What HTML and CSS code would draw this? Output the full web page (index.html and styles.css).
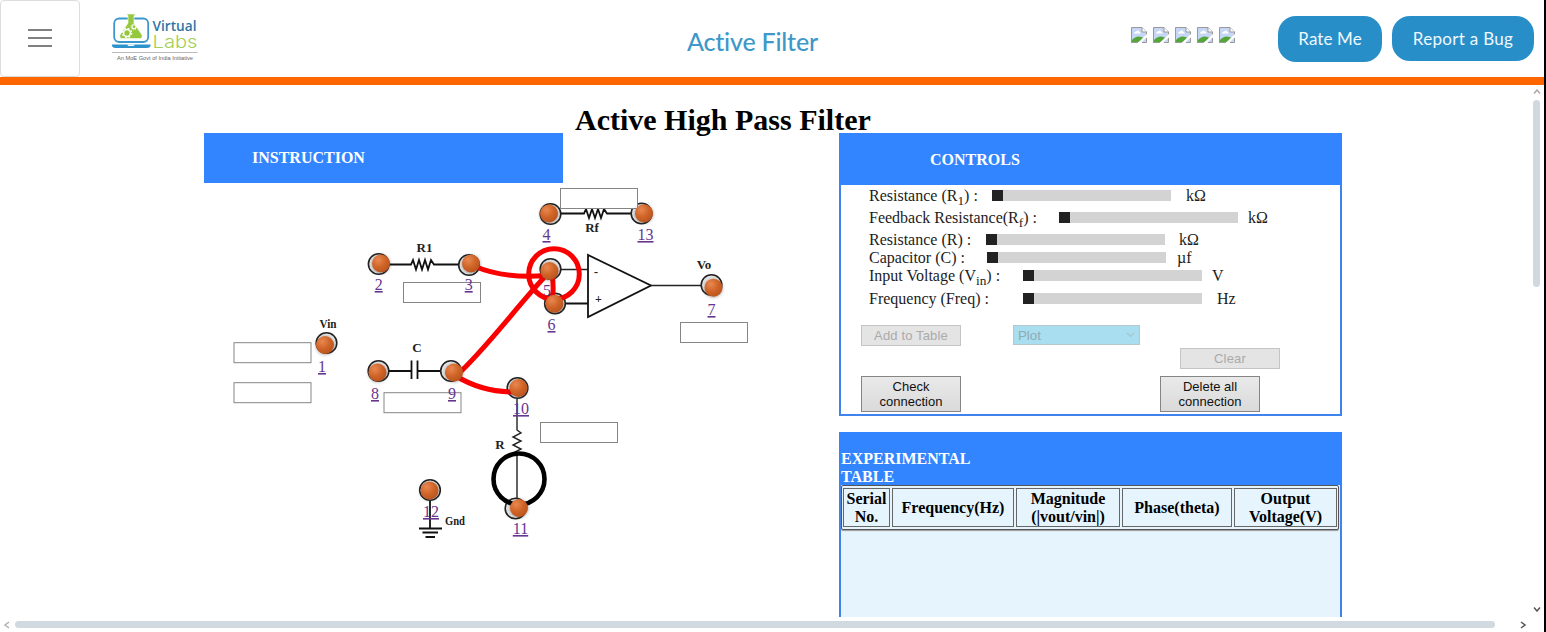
FILE: index.html
```html
<!DOCTYPE html>
<html lang="en">
<head>
<meta charset="utf-8">
<title>Active Filter</title>
<link rel="stylesheet" href="styles.css">
</head>
<body>
<header class="topbar">
  <button class="menu" aria-label="Menu"><span></span><span></span><span></span></button>
  <svg class="logo" width="90" height="50" viewBox="110 12 90 50">
    <rect x="114.200" y="18.500" width="34" height="23.500" rx="5" fill="#fff" stroke="#3b97cb" stroke-width="1.800"/>
    <path d="M112 44.500H150.500V46Q150 48 147 48H115.500Q112.500 48 112 46Z" fill="#2d93cc"/>
    <path d="M127 44.500H135L133.500 46H128.500Z" fill="#fff"/>
    <path d="M127 14H135V15.500H134V23L142 35Q143 38.500 139.500 38.500H122.500Q119 38.500 120 35L128 23V15.500H127Z" fill="#94c83d" stroke="#fff" stroke-width=".6"/>
    <circle cx="127" cy="33" r="3.400" fill="none" stroke="#fff" stroke-width="1.500"/>
    <circle cx="127" cy="33" r="4.700" fill="none" stroke="#fff" stroke-width="1.200" stroke-dasharray="1.850 1.850"/>
    <circle cx="134" cy="26.800" r="2" fill="none" stroke="#fff" stroke-width="1.100"/>
    <circle cx="134" cy="26.800" r="3" fill="none" stroke="#fff" stroke-width="0.800" stroke-dasharray="1.200 1.200"/>
    <text class="logo-virtual" x="152.500" y="31" textLength="44" lengthAdjust="spacingAndGlyphs">Virtual</text>
    <text class="logo-labs" x="152.500" y="48" textLength="45" lengthAdjust="spacingAndGlyphs">Labs</text>
    <path d="M112 52.500H197.500" stroke="#aaa" stroke-width="0.800"/>
    <text class="logo-tag" x="117" y="59.500" textLength="76" lengthAdjust="spacingAndGlyphs">An MoE Govt of India Initiative</text>
  </svg>
  <h1 class="lab-title">Active Filter</h1>
  <svg width="0" height="0" class="defs">
    <symbol id="broken" viewBox="0 0 16 16">
      <path d="M.5.500H11L15.500 5V15.500H.5Z" fill="#c6d6f5"/>
      <path d="M3 6.500Q3 4.500 5 4.500Q7 2.500 8.500 5Q10 5.500 9.500 6.500Z" fill="#fff"/>
      <path d="M1 15V13Q6 7 13 11L9 15Z" fill="#55a63a"/>
      <path d="M.5 16V.5H11L15.500 5V9M.5 15.500H7" fill="none" stroke="#999" stroke-width="1"/>
      <path d="M11 .5V5H15.500" fill="#fff" stroke="#999"/>
      <path d="M16 7V10L10 16H6.500Z" fill="#fff"/>
      <path d="M15.500 11V15.500H11" fill="none" stroke="#999"/>
    </symbol>
  </svg>
  <div class="stars">
    <svg><use href="#broken"/></svg><svg><use href="#broken"/></svg><svg><use href="#broken"/></svg><svg><use href="#broken"/></svg><svg><use href="#broken"/></svg>
  </div>
  <button class="pill rate">Rate Me</button>
  <button class="pill bug">Report a Bug</button>
</header>

<main class="viewport">
  <section class="page">
    <h2 class="heading">Active High Pass Filter</h2>
    <div class="workspace">
      <div class="left">
        <div class="instruction">INSTRUCTION</div>
        <svg class="circuit" width="635" height="434" viewBox="204 183 635 434">
          <defs>
            <radialGradient id="copper" cx="35%" cy="30%" r="75%">
              <stop offset="0" stop-color="#e98850"/><stop offset=".55" stop-color="#cf6428"/><stop offset="1" stop-color="#b9541d"/>
            </radialGradient>
            <filter id="soft" x="-50%" y="-50%" width="200%" height="200%"><feDropShadow dx="0" dy="0.500" stdDeviation="1.500" flood-color="#333" flood-opacity=".5"/></filter>
          </defs>
          <g class="wire">
            <path d="M389 264.500H411L413 260L416 269.500L419 260L422 269.500L425 260L428 269.500L431 260L434 264.500H459"/>
            <path d="M561 213.500H584L586 209L589 218L592 209L595 218L598 209L601 218L604 209L607 213.500H631"/>
            <path d="M389 371H411M411.500 360.500V379M417.500 360.500V379M418 371H440"/>
            <path d="M565 303.500H588M588 255V317L651 285.500Z"/>
            <path d="M561 269.500H588M651 285.500H702" class="thin"/>
            <path d="M517 399V430L521 433L513 437L521 441L513 445L521 449L515 452L517 455V498" class="thin"/>
            <path d="M430 501V528M419 528.500H442M422.500 532.500H438M425.500 537H435"/>
          </g>
          <g class="ring">
            <circle cx="550.500" cy="214" r="10.300"/><circle cx="641.500" cy="213.500" r="10.300"/>
            <circle cx="550.500" cy="269" r="10.300"/><circle cx="555" cy="303.500" r="10.300"/>
            <circle cx="378.700" cy="264" r="10.300"/><circle cx="469" cy="265" r="10.300"/>
            <circle cx="711.500" cy="285" r="10.300"/><circle cx="326.500" cy="343" r="10.300"/>
            <circle cx="378.500" cy="371" r="10.300"/><circle cx="451" cy="371" r="10.300"/>
            <circle cx="517.500" cy="388" r="10.300"/><circle cx="515.500" cy="508.500" r="10.300"/>
            <circle cx="430" cy="490" r="10.300"/>
          </g>
          <g class="field">
            <rect x="560.500" y="188.500" width="77" height="20"/><rect x="403.500" y="282.500" width="77" height="20"/>
            <rect x="680.500" y="322.500" width="67" height="20"/><rect x="234" y="342.700" width="77" height="20"/>
            <rect x="234" y="382.700" width="77" height="20"/><rect x="384" y="392.700" width="77" height="20"/>
            <rect x="540.500" y="422.500" width="77" height="20"/>
          </g>
          <g class="pin">
            <text x="546.500" y="240">4</text><text x="645.500" y="240">13</text>
            <text x="378.700" y="290">2</text><text x="468.700" y="290">3</text><text x="547" y="296">5</text>
            <text x="551.500" y="330">6</text><text x="711.500" y="315">7</text><text x="322" y="372">1</text>
            <text x="375" y="399">8</text><text x="452" y="399">9</text><text x="521" y="414">10</text>
            <text x="520.500" y="534">11</text><text x="431" y="517">12</text>
          </g>
          <g class="part">
            <text x="424.500" y="251.500">R1</text><text x="592" y="232">Rf</text><text x="704" y="269">Vo</text>
            <text x="328" y="328" textLength="17" lengthAdjust="spacingAndGlyphs">Vin</text><text x="417" y="352">C</text><text x="500" y="449">R</text>
            <text x="455" y="524.500" textLength="20" lengthAdjust="spacingAndGlyphs">Gnd</text>
            <text x="596" y="276" class="sign">-</text><text x="598.500" y="303" class="sign">+</text>
          </g>
          <circle cx="519" cy="479" r="25.500" fill="none" stroke="#000" stroke-width="4.600"/>
          <g class="lead">
            <circle cx="554" cy="274" r="25.300"/>
            <path d="M474 266Q504 279 546 275.500M546 275.500C518 305 485 350 456 376M552 274Q554 287 552.500 299M456 376Q482 392 514 392"/>
          </g>
          <g class="ball" filter="url(#soft)">
            <circle cx="549" cy="213.500" r="9"/><circle cx="644" cy="213.300" r="9"/>
            <circle cx="549.500" cy="271" r="9"/><circle cx="554.500" cy="303.700" r="9"/>
            <circle cx="381" cy="263.500" r="9"/><circle cx="471" cy="263.500" r="9"/>
            <circle cx="713.500" cy="287.700" r="9"/><circle cx="325" cy="345" r="9"/>
            <circle cx="377.500" cy="372.500" r="9"/><circle cx="454" cy="372.500" r="9"/>
            <circle cx="518.500" cy="388" r="9"/><circle cx="519" cy="508" r="9"/>
            <circle cx="429.500" cy="490.500" r="9"/>
          </g>
        </svg>
      </div>
      <div class="right">
        <section class="controls">
          <div class="controls-head">CONTROLS</div>
          <div class="controls-body">
            <div class="row r1"><label>Resistance (R<sub>1</sub>) :</label><i class="slider"></i><span class="unit">kΩ</span></div>
            <div class="row rf"><label>Feedback Resistance(R<sub>f</sub>) :</label><i class="slider"></i><span class="unit">kΩ</span></div>
            <div class="row r"><label>Resistance (R) :</label><i class="slider"></i><span class="unit">kΩ</span></div>
            <div class="row c"><label>Capacitor (C) :</label><i class="slider"></i><span class="unit">µf</span></div>
            <div class="row vin"><label>Input Voltage (V<sub>in</sub>) :</label><i class="slider"></i><span class="unit">V</span></div>
            <div class="row freq"><label>Frequency (Freq) :</label><i class="slider"></i><span class="unit">Hz</span></div>
            <div class="actions">
              <button class="btn off">Add to Table</button>
              <div class="plot">Plot<svg width="9" height="6" viewBox="0 0 9 6"><path d="M1 1L4.500 4.500L8 1" fill="none" stroke="#a8c4cc" stroke-width="1.200"/></svg></div>
              <button class="btn off clear">Clear</button>
            </div>
            <div class="actions second">
              <button class="btn tall">Check<br>connection</button>
              <button class="btn tall">Delete all<br>connection</button>
            </div>
          </div>
        </section>
        <section class="experiment">
          <div class="experiment-head">EXPERIMENTAL<br>TABLE</div>
          <div class="results">
            <div>Serial<br>No.</div><div>Frequency(Hz)</div><div>Magnitude<br>(|vout/vin|)</div><div>Phase(theta)</div><div>Output<br>Voltage(V)</div>
          </div>
        </section>
      </div>
    </div>
  </section>
  <div class="vscroll">
    <svg width="8" height="5" viewBox="0 0 8 5"><path d="M1 4.500L4 1L7 4.500" fill="none" stroke="#aaa" stroke-width="1.500"/></svg>
    <i></i>
    <svg width="8" height="5" viewBox="0 0 8 5"><path d="M1 .5L4 4L7 .5" fill="none" stroke="#555" stroke-width="1.500"/></svg>
  </div>
</main>
<div class="hscroll">
  <svg width="7" height="8" viewBox="0 0 7 8"><path d="M6 1L2 4L6 7" fill="none" stroke="#b0b0b0" stroke-width="1.500"/></svg>
  <i></i>
  <svg width="7" height="8" viewBox="0 0 7 8"><path d="M1 1L5 4L1 7" fill="none" stroke="#555" stroke-width="1.500"/></svg>
</div>
</body>
</html>
```

FILE: styles.css
```css
* { box-sizing: border-box; }
body {
  margin: 0;
  width: 1546px;
  height: 632px;
  overflow: hidden;
  border-right: 2px solid #000;
  background: #fff;
  font: 16px/18px "Liberation Serif", serif;
  color: #000;
}
.topbar {
  display: flex;
  align-items: flex-start;
  height: 85px;
  border-bottom: 8px solid #ff6600;
}
.menu {
  display: flex;
  flex-direction: column;
  align-items: center;
  justify-content: center;
  gap: 6px;
  width: 80px;
  height: 77px;
  padding: 0 0 2px;
  border: 1px solid #ddd;
  border-radius: 4px;
  background: #fff;
}
.menu span { width: 24px; height: 2px; background: #808080; }
.logo { margin: 12px 0 0 30px; }
.logo-virtual { font: 600 15px/1 "Open Sans", sans-serif; fill: #2e75a5; }
.logo-labs { font: 300 17px/1 "Inter", sans-serif; fill: #a4cf55; }
.logo-tag { font: 5.5px "Liberation Sans", sans-serif; fill: #666; }
.lab-title {
  width: 400px;
  margin: 24px 0 0 487px;
  font: 500 25px/34px Lato, sans-serif;
  letter-spacing: -.2px;
  color: #3e98c8;
}
.defs { position: absolute; }
.stars { display: flex; gap: 6px; margin: 27px 0 0 44px; }
.stars svg { width: 16px; height: 16px; }
.pill {
  flex: none;
  padding: 0;
  border: 0;
  border-radius: 18px;
  background: #288ec8;
  color: #eef8ff;
  font: 17px/20px Lato, sans-serif;
  letter-spacing: .3px;
}
.rate { width: 104px; height: 46px; margin: 16px 0 0 43px; letter-spacing: .1px; }
.bug { width: 142px; height: 45px; margin: 16px 0 0 10px; }
.viewport { display: flex; height: 532px; }
.page { width: 1529px; height: 532px; overflow: hidden; }
.heading {
  height: 48px;
  margin: 0 0 0 575px;
  padding-top: 18px;
  font: bold 30px/34px "Liberation Serif", serif;
}
.workspace { display: flex; padding-left: 204px; }
.left { width: 635px; }
.instruction {
  width: 359px;
  height: 50px;
  padding: 16px 48px;
  background: #3385ff;
  color: #fff;
  font-weight: bold;
}
.circuit { display: block; }
.wire path { fill: none; stroke: #111; stroke-width: 1.8; }
.wire .thin { stroke: #222; stroke-width: 1.4; }
.ring circle { fill: #e5e5e5; stroke: #222; stroke-width: 1.6; }
.field rect { fill: #fff; stroke: #858585; stroke-width: 1; }
.pin text { font: 16px "Liberation Serif", serif; text-anchor: middle; text-decoration: underline; fill: #66358f; }
.part text { font: bold 13px "Liberation Serif", serif; fill: #222; text-anchor: middle; }
.part .sign { font-size: 12px; }
.lead circle, .lead path { fill: none; stroke: #fa0000; stroke-width: 5; }
.ball circle { fill: url(#copper); }
.controls {
  width: 503px;
  height: 283px;
  border: 2px solid #3f83ee;
  border-top: 0;
}
.controls-head {
  height: 52px;
  margin: 0 -2px;
  padding: 18px 0 0 91px;
  background: #3385ff;
  color: #fff;
  font-weight: bold;
}
.controls-body { padding-top: 2px; }
.row { display: flex; align-items: center; height: 18px; margin-left: 28px; margin-bottom: 4px; color: #1c1c1c; }
.row label { white-space: nowrap; }
.row sub { line-height: 0; }
.slider { height: 11px; width: 179px; margin-bottom: 1px; background: linear-gradient(90deg, #222 11px, #d3d3d3 11px); }
.r, .c { margin-bottom: 0; }
.vin { margin-bottom: 5px; }
.r1 label { width: 123px; }
.rf label { width: 190px; }
.r label { width: 117px; }
.c label { width: 118px; }
.vin label, .freq label { width: 154px; }
.r1 .unit, .freq .unit { margin-left: 15px; }
.rf .unit, .vin .unit { margin-left: 10px; }
.r .unit { margin-left: 14px; }
.c .unit { margin-left: 11px; }
.actions { display: flex; align-items: flex-start; height: 51px; padding-left: 20px; margin-top: 17px; }
.btn {
  width: 100px;
  height: 21px;
  padding: 0;
  border: 1px solid #858585;
  background: linear-gradient(#e9e9e9, #dadada);
  color: #111;
  font: 13px/15px "Liberation Sans", sans-serif;
}
.off { border-color: #c4c4c4; background: #e4e4e4; color: #aaa; letter-spacing: .15px; }
.plot {
  display: flex;
  justify-content: space-between;
  align-items: center;
  width: 127px;
  height: 20px;
  margin-left: 52px;
  padding: 0 4px;
  border: 1px solid #b6c8cd;
  background: #a9ddf0;
  color: #8eabb4;
  font: 13.3px/15px "Liberation Sans", sans-serif;
}
.clear { margin: 23px 0 0 40px; }
.second { gap: 199px; height: 36px; margin-top: 0; }
.tall { height: 36px; }
.experiment {
  width: 503px;
  height: 300px;
  margin-top: 16px;
  border: solid #3f83ee;
  border-width: 0 2px;
  background: #e6f4fe;
}
.experiment-head {
  height: 53px;
  margin: 0 -2px;
  padding: 18px 2px 0;
  background: #3385ff;
  color: #fff;
  font-weight: bold;
}
.results {
  display: grid;
  grid-template-columns: 47px 122px 104px 110px 103px;
  gap: 2px;
  width: 498px;
  height: 45px;
  padding: 2px 0 2px 1px;
  border: 1px solid #555;
  border-radius: 2px;
  background: #e6f4fe;
  box-shadow: 0 1px 1px #999;
  font-weight: bold;
}
.results div {
  display: flex;
  align-items: center;
  justify-content: center;
  text-align: center;
  border: 1px solid #666;
}
.vscroll { display: flex; flex-direction: column; align-items: center; width: 15px; padding-top: 4px; }
.vscroll i { width: 7px; height: 187px; margin: 6px 0 320px; border-radius: 4px; background: #cfd9df; }
.vscroll svg { flex: none; }
.hscroll { display: flex; align-items: center; height: 15px; padding-left: 3px; }
.hscroll i { width: 1480px; height: 7px; margin: 0 25px 0 5px; border-radius: 4px; background: #d0dae0; }
```
